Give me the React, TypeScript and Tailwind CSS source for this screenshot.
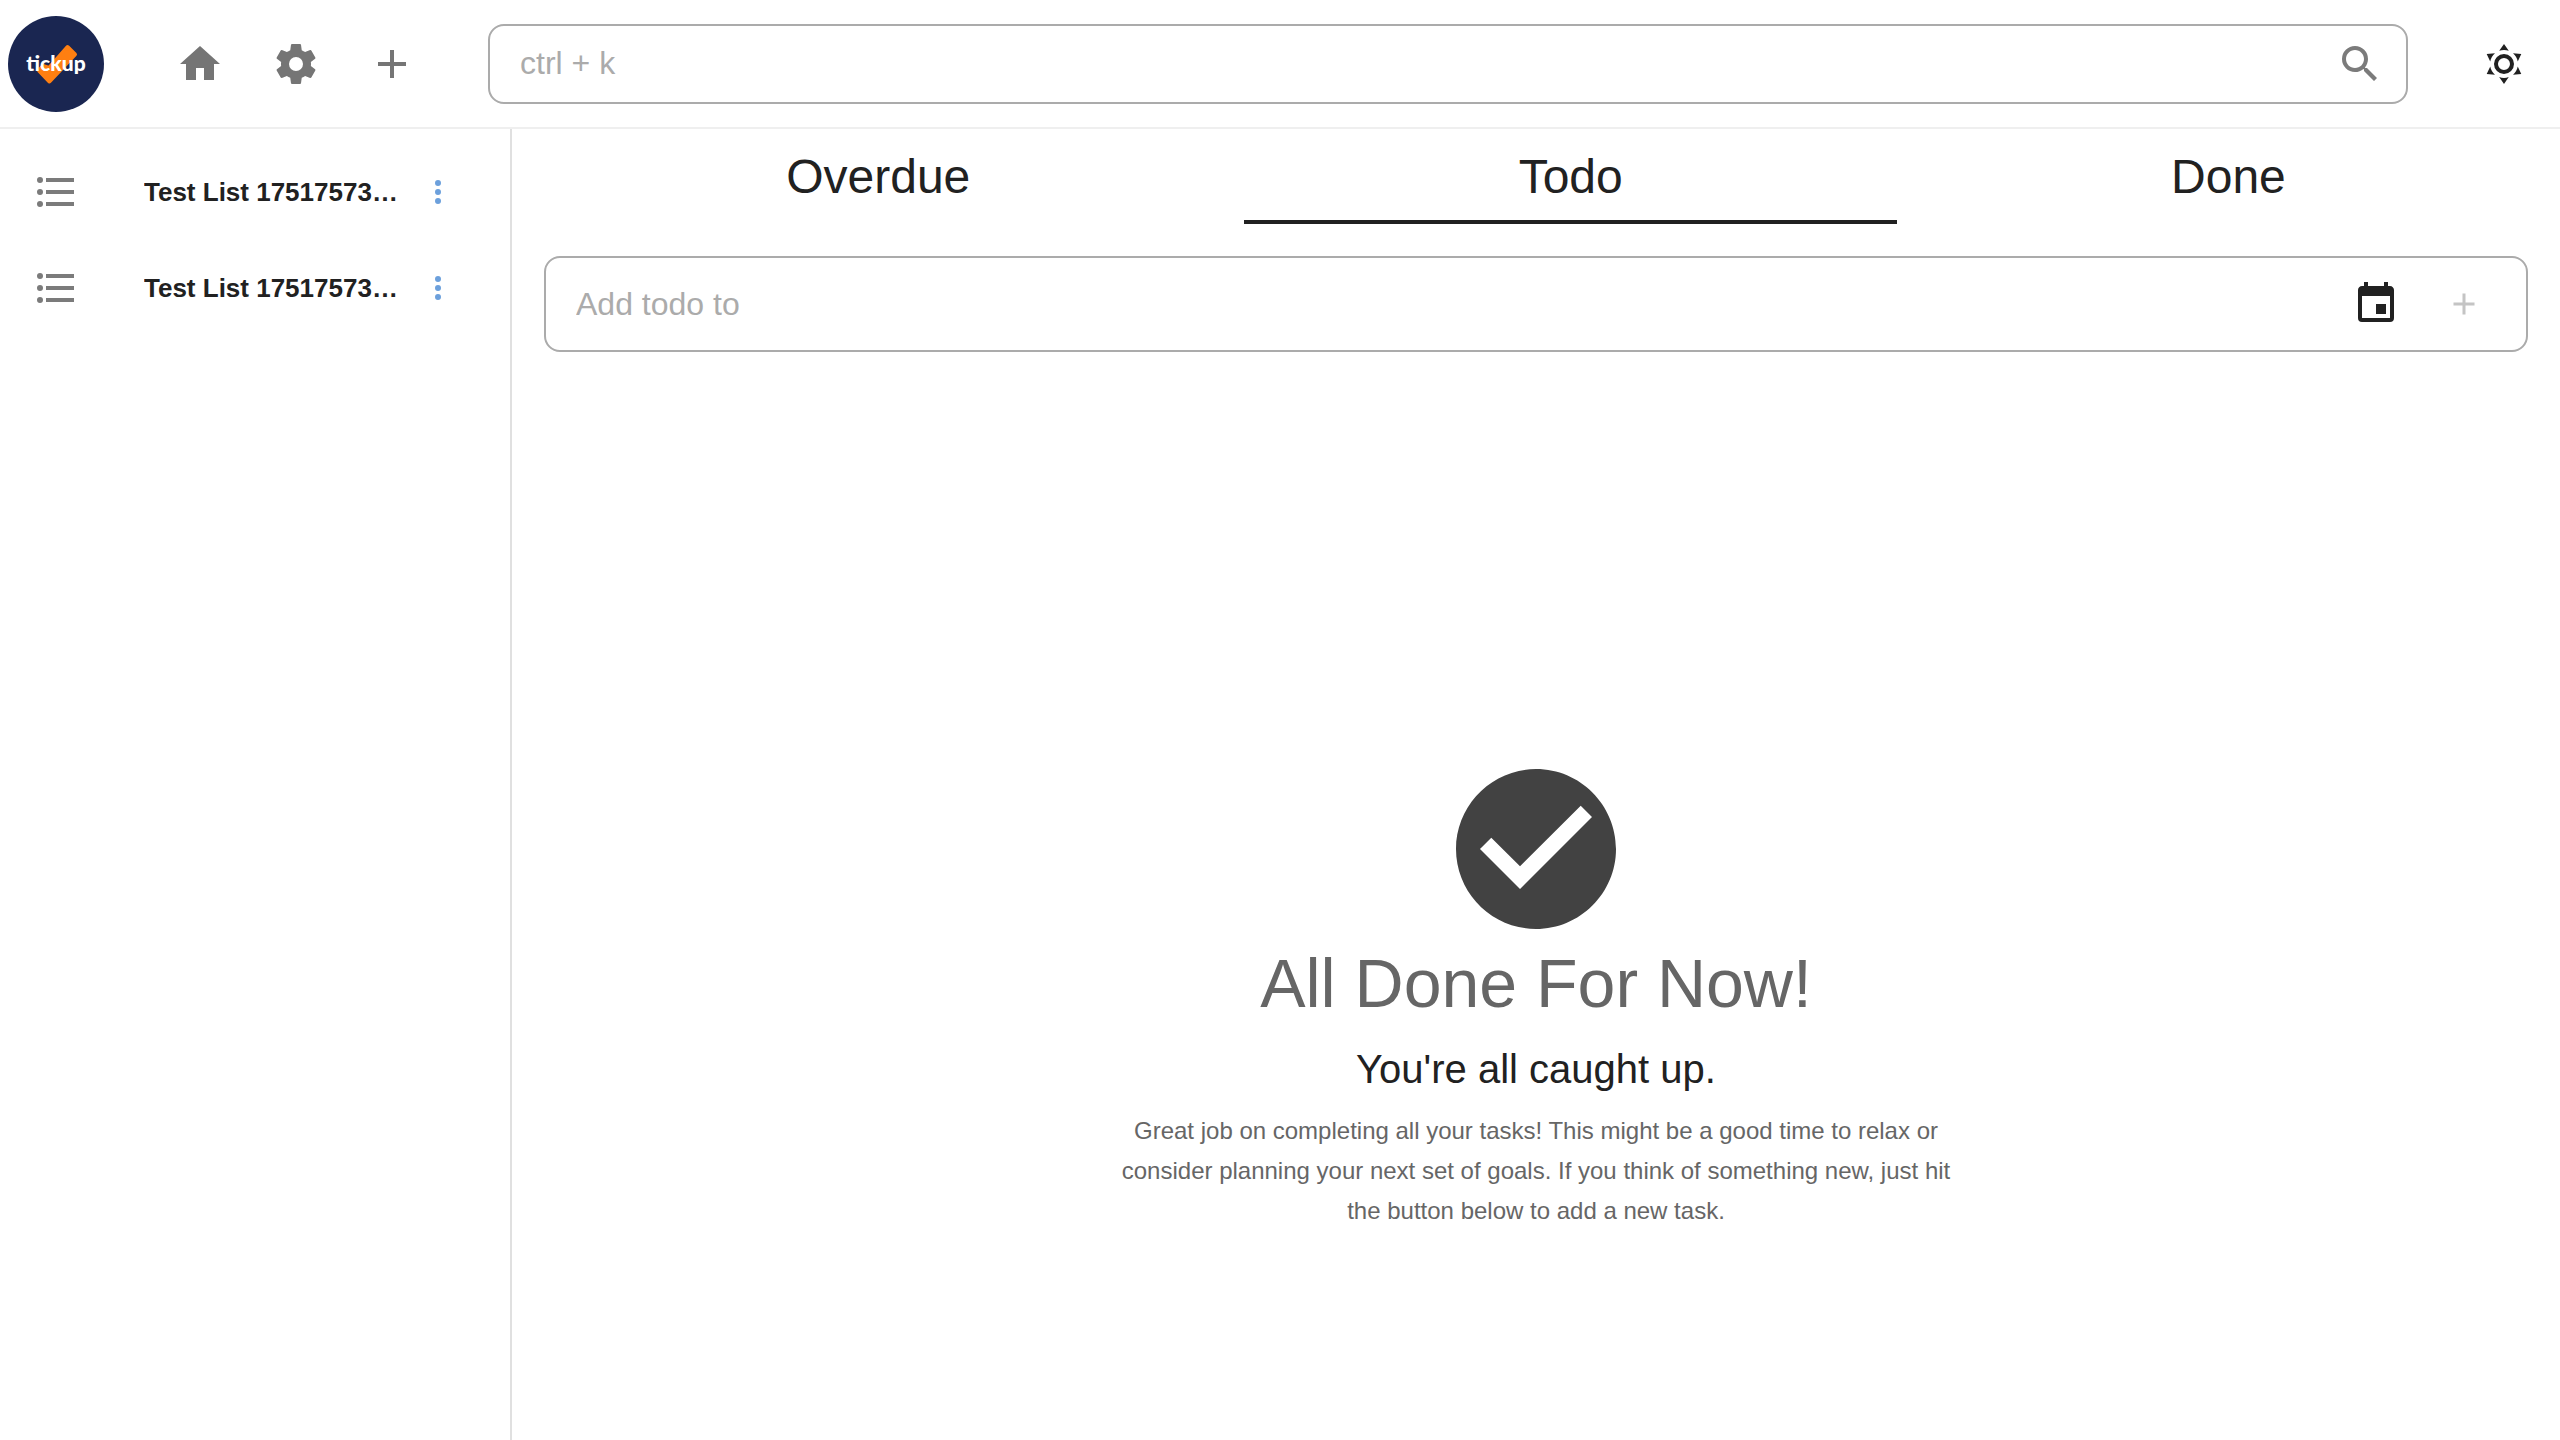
import React from "react";

const paths = {
  home: "M10 20V14H14V20H19V12H22L12 3L2 12H5V20H10Z",
  cog: "M12,15.5A3.5,3.5 0 0,1 8.5,12A3.5,3.5 0 0,1 12,8.5A3.5,3.5 0 0,1 15.5,12A3.5,3.5 0 0,1 12,15.5M19.43,12.97C19.47,12.65 19.5,12.33 19.5,12C19.5,11.67 19.47,11.34 19.43,11L21.54,9.37C21.73,9.22 21.78,8.95 21.66,8.73L19.66,5.27C19.54,5.05 19.27,4.96 19.05,5.05L16.56,6.05C16.04,5.66 15.5,5.32 14.87,5.07L14.5,2.42C14.46,2.18 14.25,2 14,2H10C9.75,2 9.54,2.18 9.5,2.42L9.13,5.07C8.5,5.32 7.96,5.66 7.44,6.05L4.95,5.05C4.73,4.96 4.46,5.05 4.34,5.27L2.34,8.73C2.21,8.95 2.27,9.22 2.46,9.37L4.57,11C4.53,11.34 4.5,11.67 4.5,12C4.5,12.33 4.53,12.65 4.57,12.97L2.46,14.63C2.27,14.78 2.21,15.05 2.34,15.27L4.34,18.73C4.46,18.95 4.73,19.03 4.95,18.95L7.44,17.94C7.96,18.34 8.5,18.68 9.13,18.93L9.5,21.58C9.54,21.82 9.75,22 10,22H14C14.25,22 14.46,21.82 14.5,21.58L14.87,18.93C15.5,18.67 16.04,18.34 16.56,17.94L19.05,18.95C19.27,19.03 19.54,18.95 19.66,18.73L21.66,15.27C21.78,15.05 21.73,14.78 21.54,14.63L19.43,12.97Z",
  plus: "M19 13H13V19H11V13H5V11H11V5H13V11H19V13Z",
  magnify:
    "M9.5,3A6.5,6.5 0 0,1 16,9.5C16,11.11 15.41,12.59 14.44,13.73L14.71,14H15.5L20.5,19L19,20.5L14,15.5V14.71L13.73,14.44C12.59,15.41 11.11,16 9.5,16A6.5,6.5 0 0,1 3,9.5A6.5,6.5 0 0,1 9.5,3M9.5,5C7,5 5,7 5,9.5C5,12 7,14 9.5,14C12,14 14,12 14,9.5C14,7 12,5 9.5,5Z",
  sunny:
    "M12,7A5,5 0 0,1 17,12A5,5 0 0,1 12,17A5,5 0 0,1 7,12A5,5 0 0,1 12,7M12,9A3,3 0 0,0 9,12A3,3 0 0,0 12,15A3,3 0 0,0 15,12A3,3 0 0,0 12,9M12,2L14.39,5.42C13.65,5.15 12.84,5 12,5C11.16,5 10.35,5.15 9.61,5.42L12,2M3.34,7L7.5,6.65C6.9,7.16 6.36,7.78 5.94,8.5C5.5,9.24 5.25,10 5.11,10.79L3.34,7M3.36,17L5.12,13.23C5.26,14 5.53,14.78 5.95,15.5C6.37,16.24 6.91,16.86 7.5,17.37L3.36,17M20.65,7L18.88,10.79C18.74,10 18.47,9.23 18.05,8.5C17.63,7.78 17.1,7.15 16.5,6.64L20.65,7M20.64,17L16.5,17.36C17.09,16.85 17.62,16.22 18.04,15.5C18.46,14.77 18.73,14 18.87,13.21L20.64,17M12,22L9.59,18.56C10.33,18.83 11.14,19 12,19C12.82,19 13.63,18.83 14.37,18.56L12,22Z",
  list: "M7,5H21V7H7V5M7,13V11H21V13H7M4,4.5A1.5,1.5 0 0,1 5.5,6A1.5,1.5 0 0,1 4,7.5A1.5,1.5 0 0,1 2.5,6A1.5,1.5 0 0,1 4,4.5M4,10.5A1.5,1.5 0 0,1 5.5,12A1.5,1.5 0 0,1 4,13.5A1.5,1.5 0 0,1 2.5,12A1.5,1.5 0 0,1 4,10.5M7,19V17H21V19H7M4,16.5A1.5,1.5 0 0,1 5.5,18A1.5,1.5 0 0,1 4,19.5A1.5,1.5 0 0,1 2.5,18A1.5,1.5 0 0,1 4,16.5Z",
  dots: "M12,16A2,2 0 0,1 14,18A2,2 0 0,1 12,20A2,2 0 0,1 10,18A2,2 0 0,1 12,16M12,10A2,2 0 0,1 14,12A2,2 0 0,1 12,14A2,2 0 0,1 10,12A2,2 0 0,1 12,10M12,4A2,2 0 0,1 14,6A2,2 0 0,1 12,8A2,2 0 0,1 10,6A2,2 0 0,1 12,4Z",
  calendar:
    "M19,19H5V8H19M16,1V3H8V1H6V3H5C3.89,3 3,3.89 3,5V19A2,2 0 0,0 5,21H19A2,2 0 0,0 21,19V5C21,3.89 20.1,3 19,3H18V1M17,12H12V17H17V12Z",
  checkCircle:
    "M12 2C6.5 2 2 6.5 2 12S6.5 22 12 22 22 17.5 22 12 17.5 2 12 2M10 17L5 12L6.41 10.59L10 14.17L17.59 6.58L19 8L10 17Z",
};

function Icon({ name, className }: { name: keyof typeof paths; className: string }) {
  return (
    <svg viewBox="0 0 24 24" fill="currentColor" aria-hidden="true" className={className}>
      <path d={paths[name]} />
    </svg>
  );
}

function IconButton({ name, label }: { name: keyof typeof paths; label: string }) {
  return (
    <button type="button" aria-label={label} className="flex size-24 items-center justify-center rounded-full text-[#757575]">
      <Icon name={name} className="size-12" />
    </button>
  );
}

function Logo() {
  return (
    <a href="#" aria-label="tickup" className="block size-24 shrink-0">
      <svg viewBox="0 0 96 96" className="size-24">
        <circle cx="48" cy="48" r="48" fill="#1a2651" />
        <path
          d="M59.5 31L67 38.5L41.5 65.5L31 54.5L35 50L41 52Z"
          fill="#ff7f11"
          stroke="#ff7f11"
          strokeWidth="4"
          strokeLinejoin="round"
        />
        <text x="48" y="55" textAnchor="middle" fill="#fff" fontSize="21" fontWeight="900" fontFamily="Lato, sans-serif">
          tickup
        </text>
      </svg>
    </a>
  );
}

const lists = [
  { id: 1, title: "Test List 17517573…" },
  { id: 2, title: "Test List 17517573…" },
];

const tabs = ["Overdue", "Todo", "Done"];

export default function App() {
  return (
    <div className="flex min-h-screen flex-col bg-white font-['Liberation_Sans',Arial,sans-serif] text-[#212121]">
      <header className="flex h-[129px] items-center border-b-2 border-[#efefef] px-2">
        <Logo />
        <nav className="ml-12 flex">
          <IconButton name="home" label="Home" />
          <IconButton name="cog" label="Settings" />
          <IconButton name="plus" label="Add list" />
        </nav>
        <div className="ml-12 flex h-20 flex-1 items-center rounded-2xl border-2 border-[#ababab] pl-[30px] pr-[22px]">
          <input
            type="text"
            aria-label="Search"
            placeholder="ctrl + k"
            className="h-full min-w-0 flex-1 bg-transparent text-[32px] outline-none placeholder:text-[#ababab]"
          />
          <button type="button" aria-label="Run search" className="text-[#7b7b7b]">
            <Icon name="magnify" className="size-12" />
          </button>
        </div>
        <button type="button" aria-label="Toggle theme" className="ml-12 flex size-24 items-center justify-center">
          <Icon name="sunny" className="size-12" />
        </button>
      </header>

      <div className="flex flex-1">
        <aside className="w-[512px] shrink-0 border-r-2 border-[#e0e0e0] pt-[15px]">
          <ul>
            {lists.map((list) => (
              <li key={list.id} className="flex h-24 items-center pl-8">
                <Icon name="list" className="size-12 shrink-0 text-[#7b7b7b]" />
                <a href="#" className="ml-16 w-[260px] truncate text-[26px] font-bold">
                  {list.title}
                </a>
                <button type="button" aria-label="List options" className="ml-4 text-[#6ca0dc]">
                  <Icon name="dots" className="size-9" />
                </button>
              </li>
            ))}
          </ul>
        </aside>

        <main className="flex min-w-0 flex-1 flex-col">
          <div role="tablist" className="flex h-[95px]">
            {tabs.map((tab) => (
              <button
                key={tab}
                type="button"
                role="tab"
                aria-selected={tab === "Todo"}
                className="flex-auto border-b-4 border-transparent px-12 pt-1 text-5xl aria-selected:border-[#212121]"
              >
                {tab}
              </button>
            ))}
          </div>

          <form className="mx-8 mt-8 flex h-24 items-center rounded-2xl border-2 border-[#ababab] pl-[30px] pr-11">
            <input
              type="text"
              aria-label="Add todo"
              placeholder="Add todo to"
              className="h-full min-w-0 flex-1 bg-transparent text-[32px] outline-none placeholder:text-[#ababab]"
            />
            <button type="button" aria-label="Pick a date">
              <Icon name="calendar" className="size-12" />
            </button>
            <button type="button" aria-label="Add" className="ml-[46px] text-[#c4c4c4]">
              <Icon name="plus" className="size-9" />
            </button>
          </form>

          <section className="flex flex-1 flex-col items-center justify-center pt-48 text-center">
            <Icon name="checkCircle" className="size-48 text-[#424242]" />
            <h1 className="text-[68px] leading-[76px] text-[#666666]">All Done For Now!</h1>
            <h2 className="mt-4 text-[40px] leading-[64px]">You're all caught up.</h2>
            <p className="mt-[10px] max-w-[864px] text-2xl leading-10 text-[#666666]">
              Great job on completing all your tasks! This might be a good time to relax or consider planning your next
              set of goals. If you think of something new, just hit the button below to add a new task.
            </p>
          </section>
        </main>
      </div>
    </div>
  );
}
